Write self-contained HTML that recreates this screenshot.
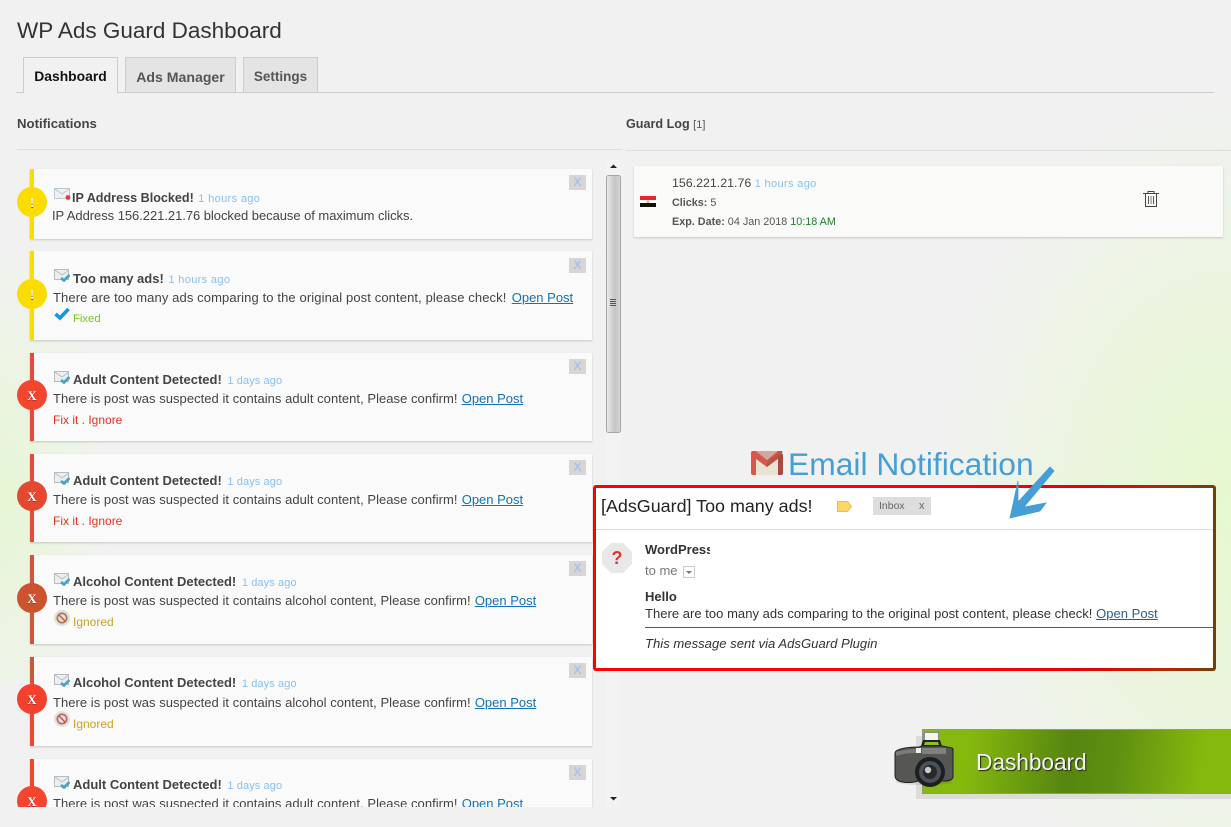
<!DOCTYPE html>
<html lang="en">
<head>
<meta charset="utf-8">
<title>WP Ads Guard Dashboard</title>
<style>
html,body{margin:0;padding:0}
body{width:1231px;height:827px;position:relative;overflow:hidden;background:#f1f1f1;font-family:"Liberation Sans",sans-serif;color:#444;font-size:13px}
.a{position:absolute;white-space:nowrap}
.bgl{position:absolute;left:0;top:60px;width:130px;height:621px;background:radial-gradient(ellipse 110px 260px at 0 440px,#e6f6d4 0,#edf4e4 55%,rgba(241,241,241,0) 100%)}
.bgr{position:absolute;left:850px;top:0;width:381px;height:827px;background:radial-gradient(ellipse 300px 420px at 381px 510px,#e6f9cf 0,#ebf5dd 45%,rgba(241,241,241,0) 100%)}
.tab{position:absolute;top:57px;height:34px;line-height:37px;text-align:center;font-weight:bold;font-size:14px;border:1px solid #ccc;border-bottom:0;background:#e4e4e4;color:#555}
.list{position:absolute;left:0;top:160px;width:606px;height:647px;overflow:hidden}
.card{position:absolute;left:30px;width:558px;background:#fafafa;border-left:4px solid #e8493a;box-shadow:0 1px 2px rgba(0,0,0,.18)}
.dot{position:absolute;left:17px;width:30px;height:30px;border-radius:50%;text-align:center;color:#fff;font:bold 13px/31px "Liberation Serif",serif;text-shadow:0 1px 0 #a33}
.x{position:absolute;left:569px;width:17px;height:15px;background:#d6d6d6;color:#a9c3e4;font:bold 12px/15px "Liberation Sans",sans-serif;text-align:center}
.t{position:absolute;left:73px;margin-top:.5px;font-weight:bold;font-size:13px;color:#444;white-space:nowrap;line-height:16px}
.t span{font-weight:normal;font-size:11px;color:#86c1f2;margin-left:2px;letter-spacing:.1px}
.t span.h{margin-left:1px;letter-spacing:.35px}
.b{position:absolute;left:53px;margin-top:1px;font-size:13px;letter-spacing:.04px;color:#444;white-space:nowrap;line-height:16px}
.b a{color:#0f73b5;text-decoration:underline;margin-left:.5px;letter-spacing:0}
.s{position:absolute;margin-top:1px;font-size:12px;white-space:nowrap;line-height:14px}
.m{position:absolute;left:54px;width:16px;height:13px}
.log{font-size:10.8px;color:#555}
</style>
</head>
<body>
<div class="bgl"></div>
<div class="bgr"></div>

<div class="a" style="left:17px;top:17px;font-size:22.5px;line-height:28px;color:#333">WP Ads Guard Dashboard</div>
<div class="a" style="left:16px;top:92px;width:1198px;height:1px;background:#ccc"></div>
<div class="tab" style="left:23px;width:93px;height:35px;background:#f1f1f1;color:#111;font-size:13.9px">Dashboard</div>
<div class="tab" style="left:125px;width:109px;font-size:14.1px;line-height:38px">Ads Manager</div>
<div class="tab" style="left:243px;width:73px;font-size:13.5px">Settings</div>

<div class="a" style="left:17px;top:116px;font-weight:bold;font-size:13.2px;line-height:16px;color:#444">Notifications</div>
<div class="a" style="left:17px;top:149px;width:605px;height:1px;background:#ddd"></div>
<div class="a" style="left:626px;top:116px;font-weight:bold;font-size:12.6px;line-height:16px;color:#444">Guard Log <span style="font-weight:normal;font-size:11px;color:#555">[1]</span></div>
<div class="a" style="left:626px;top:150px;width:605px;height:1px;background:#ddd"></div>

<div class="list">
  <div class="card" style="top:9px;height:70px;border-color:#fbdc00"></div>
  <div class="dot" style="top:27px;background:#fbdc00">!</div>
  <div class="x" style="top:15px">X</div>
  <svg class="m" style="top:28px;left:54px;width:18px" viewBox="0 0 18 13"><rect x=".5" y=".5" width="15" height="10" fill="#f0f0f0" stroke="#bcc8d2"/><path d="M1 1l7 5 7-5" fill="none" stroke="#bcc8d2"/><circle cx="14" cy="9.5" r="2.4" fill="#e23a4a"/></svg>
  <div class="t" style="top:29px;left:72px;font-size:12.6px">IP Address Blocked! <span class="h">1 hours ago</span></div>
  <div class="b" style="top:47px;left:52px;letter-spacing:-.05px">IP Address 156.221.21.76 blocked because of maximum clicks.</div>

  <div class="card" style="top:91px;height:89px;border-color:#fbdc00"></div>
  <div class="dot" style="top:119px;background:#fbdc00">!</div>
  <div class="x" style="top:98px">X</div>
  <svg class="m" style="top:109px" viewBox="0 0 16 13"><rect x=".5" y=".5" width="14" height="10" fill="#eee" stroke="#b5bdc2"/><path d="M1 1l7 5 7-5" fill="none" stroke="#b5bdc2"/><path d="M7 9l3 2.5L15.500 6" fill="none" stroke="#4aa3cf" stroke-width="2.800"/></svg>
  <div class="t" style="top:110px">Too many ads! <span class="h">1 hours ago</span></div>
  <div class="b" style="top:129px;letter-spacing:.11px">There are too many ads comparing to the original post content, please check! <a style="margin-left:1.500px">Open Post</a></div>
  <svg class="a" style="left:54px;top:147px" width="16" height="14" viewBox="0 0 16 14"><path d="M1.500 7l4.500 4L14.500 2" fill="none" stroke="#1a92e6" stroke-width="3.600"/></svg>
  <div class="s" style="left:73px;top:151px;color:#6ecb1c;font-size:11.300px">Fixed</div>

  <div class="card" style="top:193px;height:88px;border-color:#e9483a"></div>
  <div class="dot" style="top:220px;background:#f4452f">X</div>
  <div class="x" style="top:199px">X</div>
  <svg class="m" style="top:211px" viewBox="0 0 16 13"><rect x=".5" y=".5" width="14" height="10" fill="#eee" stroke="#b5bdc2"/><path d="M1 1l7 5 7-5" fill="none" stroke="#b5bdc2"/><path d="M7 9l3 2.5L15.500 6" fill="none" stroke="#4aa3cf" stroke-width="2.800"/></svg>
  <div class="t" style="top:211px">Adult Content Detected! <span>1 days ago</span></div>
  <div class="b" style="top:230px">There is post was suspected it contains adult content, Please confirm! <a>Open Post</a></div>
  <div class="s" style="left:53px;top:252px;color:#e3331c">Fix it . Ignore</div>

  <div class="card" style="top:294px;height:88px;border-color:#e9483a"></div>
  <div class="dot" style="top:321px;background:#e4482f">X</div>
  <div class="x" style="top:300px">X</div>
  <svg class="m" style="top:312px" viewBox="0 0 16 13"><rect x=".5" y=".5" width="14" height="10" fill="#eee" stroke="#b5bdc2"/><path d="M1 1l7 5 7-5" fill="none" stroke="#b5bdc2"/><path d="M7 9l3 2.5L15.500 6" fill="none" stroke="#4aa3cf" stroke-width="2.800"/></svg>
  <div class="t" style="top:312px">Adult Content Detected! <span>1 days ago</span></div>
  <div class="b" style="top:331px">There is post was suspected it contains adult content, Please confirm! <a>Open Post</a></div>
  <div class="s" style="left:53px;top:353px;color:#e3331c">Fix it . Ignore</div>

  <div class="card" style="top:395px;height:89px;border-color:#d1553a"></div>
  <div class="dot" style="top:423px;background:#cd5230">X</div>
  <div class="x" style="top:401px">X</div>
  <svg class="m" style="top:413px" viewBox="0 0 16 13"><rect x=".5" y=".5" width="14" height="10" fill="#eee" stroke="#b5bdc2"/><path d="M1 1l7 5 7-5" fill="none" stroke="#b5bdc2"/><path d="M7 9l3 2.5L15.500 6" fill="none" stroke="#4aa3cf" stroke-width="2.800"/></svg>
  <div class="t" style="top:413px">Alcohol Content Detected! <span>1 days ago</span></div>
  <div class="b" style="top:432px">There is post was suspected it contains alcohol content, Please confirm! <a>Open Post</a></div>
  <svg class="a" style="left:54px;top:450px" width="16" height="16" viewBox="0 0 16 16"><circle cx="8" cy="8" r="8" fill="#dfe2cf"/><circle cx="8" cy="8" r="4.700" fill="none" stroke="#b86a60" stroke-width="1.600"/><path d="M4.700 4.700l6.600 6.600" stroke="#b86a60" stroke-width="1.600"/></svg>
  <div class="s" style="left:73px;top:454px;color:#c9a227">Ignored</div>

  <div class="card" style="top:497px;height:89px;border-color:#f4452f;border-image:linear-gradient(#c75a36 0,#c75a36 25%,#f4452f 30%) 1"></div>
  <div class="dot" style="top:524px;background:#f4402c">X</div>
  <div class="x" style="top:503px">X</div>
  <svg class="m" style="top:514px" viewBox="0 0 16 13"><rect x=".5" y=".5" width="14" height="10" fill="#eee" stroke="#b5bdc2"/><path d="M1 1l7 5 7-5" fill="none" stroke="#b5bdc2"/><path d="M7 9l3 2.500L15.500 6" fill="none" stroke="#4aa3cf" stroke-width="2.800"/></svg>
  <div class="t" style="top:514px">Alcohol Content Detected! <span>1 days ago</span></div>
  <div class="b" style="top:534px">There is post was suspected it contains alcohol content, Please confirm! <a>Open Post</a></div>
  <svg class="a" style="left:54px;top:551px" width="16" height="16" viewBox="0 0 16 16"><circle cx="8" cy="8" r="8" fill="#e2e2da"/><circle cx="8" cy="8" r="4.700" fill="none" stroke="#c0605f" stroke-width="1.600"/><path d="M4.700 4.700l6.600 6.600" stroke="#c0605f" stroke-width="1.600"/></svg>
  <div class="s" style="left:73px;top:556px;color:#d1a11f">Ignored</div>

  <div class="card" style="top:599px;height:89px;border-color:#f4452f"></div>
  <div class="dot" style="top:626px;background:#f4452f">X</div>
  <div class="x" style="top:605px">X</div>
  <svg class="m" style="top:616px" viewBox="0 0 16 13"><rect x=".5" y=".5" width="14" height="10" fill="#eee" stroke="#b5bdc2"/><path d="M1 1l7 5 7-5" fill="none" stroke="#b5bdc2"/><path d="M7 9l3 2.500L15.500 6" fill="none" stroke="#4aa3cf" stroke-width="2.800"/></svg>
  <div class="t" style="top:616px">Adult Content Detected! <span>1 days ago</span></div>
  <div class="b" style="top:635px">There is post was suspected it contains adult content, Please confirm! <a>Open Post</a></div>
</div>

<!-- scrollbar -->
<div class="a" style="left:606px;top:160px;width:15px;height:647px;background:#f3f3f3"></div>
<svg class="a" style="left:606px;top:160px" width="15" height="647" viewBox="0 0 15 647">
  <path d="M4 8h7l-3.500-3.500z" fill="#222"/>
  <path d="M4 637h7l-3.500 3.500z" fill="#222"/>
  <defs><linearGradient id="sb" x1="0" x2="1" y1="0" y2="0"><stop offset="0" stop-color="#ececec"/><stop offset=".6" stop-color="#c4c4c4"/><stop offset="1" stop-color="#d6d6d6"/></linearGradient></defs>
  <rect x=".5" y="15.500" width="14" height="257" rx="2" fill="url(#sb)" stroke="#a6a6a6"/>
  <path d="M4 139.500h6M4 141.500h6M4 143.500h6M4 145.500h6" stroke="#555" stroke-width="1"/>
</svg>

<!-- guard log card -->
<div class="a" style="left:634px;top:166px;width:589px;height:71px;background:#fafbf9;box-shadow:0 1px 2px rgba(0,0,0,.18)"></div>
<svg class="a" style="left:640px;top:196px" width="16" height="11" viewBox="0 0 16 11"><rect width="16" height="4" fill="#e8262d"/><rect y="4" width="16" height="3" fill="#fff"/><rect y="7" width="16" height="4" fill="#111"/><circle cx="8" cy="5.500" r="1.300" fill="#e0b040"/></svg>
<div class="a" style="left:672px;top:175px;font-size:12.400px;line-height:16px;color:#444">156.221.21.76 <span style="font-size:11px;color:#86c1f2;letter-spacing:.35px">1 hours ago</span></div>
<div class="a log" style="left:672px;top:195px;line-height:16px"><b>Clicks:</b> 5</div>
<div class="a log" style="left:672px;top:214px;line-height:16px"><b>Exp. Date:</b> 04 Jan 2018 <span style="color:#1d7d2a">10:18 AM</span></div>
<svg class="a" style="left:1143px;top:191px" width="16" height="16" viewBox="0 0 16 16"><path d="M0 2.500h16M5 2.500V.5h6v2M2.500 2.500v13h11v-13" fill="none" stroke="#444" stroke-width="1"/><path d="M5.500 5v8M10.500 5v8" stroke="#555" stroke-width="1"/><path d="M8 5v8" stroke="#aaa" stroke-width="1.600"/></svg>

<!-- email notification -->
<svg class="a" style="left:751px;top:451px" width="33" height="24" viewBox="0 0 33 24">
  <path d="M2 0h28a2 2 0 0 1 2 2v20a2 2 0 0 1-2 2H2a2 2 0 0 1-2-2V2a2 2 0 0 1 2-2z" fill="#e8e4d4"/>
  <path d="M5 0h22L16 9z" fill="#cfa9a0"/>
  <path d="M0 2a2 2 0 0 1 2-2h3v24H2a2 2 0 0 1-2-2z" fill="#d9574a"/>
  <path d="M1 0h4l11 9 0 7L1 5z" fill="#d9574a"/>
  <path d="M31 0h-4L16 9v7l15-11z" fill="#c9564b"/>
  <path d="M27 5l5-2v19a2 2 0 0 1-2 2h-3z" fill="#a84a3e"/>
  <path d="M16 12L32 0v1L16 16z" fill="#a84a3e" opacity=".5"/>
</svg>
<div class="a" style="left:788px;top:445px;font-size:31.800px;line-height:38px;color:#459fd6">Email Notification</div>

<div class="a" style="left:596px;top:488px;width:617px;height:180px;background:#fff"></div>
<div class="a" style="left:593px;top:485px;width:623px;height:3px;border-radius:3px 3px 0 0;background:linear-gradient(90deg,#ff0000 0,#ff0000 60%,#e80000 78%,#b02a00 92%,#7a3e00 99%)"></div>
<div class="a" style="left:593px;top:668px;width:623px;height:3px;border-radius:0 0 3px 3px;background:linear-gradient(90deg,#ff0000 0,#ff0000 60%,#e80000 78%,#b02a00 92%,#7a3e00 99%)"></div>
<div class="a" style="left:593px;top:488px;width:3px;height:180px;background:#ff0000"></div>
<div class="a" style="left:1213px;top:488px;width:3px;height:180px;background:#7a3e00"></div>
<svg class="a" style="left:1008px;top:465px" width="48" height="56" viewBox="0 0 48 56"><path d="M2 53L10 16V37L42 2 46 6 16 42 38 38 32 46z" fill="#459fd6" stroke="#459fd6" stroke-width=".8"/></svg>
<div class="a" style="left:601px;top:496px;font-size:17.900px;line-height:21px;color:#222">[AdsGuard] Too many ads!</div>
<svg class="a" style="left:837px;top:501px" width="15" height="11" viewBox="0 0 15 11"><path d="M.5.500h10L14.500 5.500l-4 5H.5z" fill="#fdd663" stroke="#e8bd55"/></svg>
<div class="a" style="left:873px;top:497px;width:58px;height:18px;background:#ddd"></div>
<div class="a" style="left:879px;top:499px;font-size:10.500px;line-height:14px;color:#666">Inbox</div>
<div class="a" style="left:919px;top:499px;font-size:11px;line-height:14px;color:#666">x</div>
<div class="a" style="left:596px;top:529px;width:617px;height:1px;background:#ddd"></div>
<svg class="a" style="left:602px;top:543px" width="30" height="30" viewBox="0 0 30 30"><path d="M9 0h12l9 9v12l-9 9H9l-9-9V9z" fill="#e8e8e8"/><text x="15" y="21" font-family="Liberation Sans" font-weight="bold" font-size="18" text-anchor="middle" fill="#d93a35">?</text></svg>
<div class="a" style="left:645px;top:542px;width:65px;overflow:hidden;font-weight:bold;font-size:13px;line-height:16px;color:#333">WordPress</div>
<div class="a" style="left:645px;top:563px;font-size:13px;line-height:16px;color:#777">to me</div>
<svg class="a" style="left:683px;top:566px" width="12" height="12" viewBox="0 0 12 12"><rect x=".5" y=".5" width="11" height="11" fill="#fff" stroke="#ccc"/><path d="M3 5h6L6 8z" fill="#777"/></svg>
<div class="a" style="left:645px;top:589px;font-weight:bold;font-size:13px;line-height:16px;color:#333">Hello</div>
<div class="a" style="left:645px;top:606px;font-size:13px;letter-spacing:.03px;line-height:16px;color:#333">There are too many ads comparing to the original post content, please check! <span style="color:#2b5f87;text-decoration:underline">Open Post</span></div>
<div class="a" style="left:645px;top:627px;width:568px;height:1px;background:linear-gradient(90deg,#555,#555 60%,#4f6b35)"></div>
<div class="a" style="left:645px;top:636px;font-style:italic;font-size:13.100px;line-height:16px;color:#333">This message sent via AdsGuard Plugin</div>

<!-- dashboard banner -->
<div class="a" style="left:916px;top:736px;width:315px;height:63px;background:#dcdcd9"></div>
<div class="a" style="left:922px;top:729px;width:309px;height:65px;box-sizing:border-box;border:1px solid #8f9a7c;border-right:0;background:linear-gradient(97deg,#85b90e 0,#85b90e 15%,#578510 47%,#5f8f10 62%,#85b90e 90%,#85b90e 100%)"></div>
<div class="a" style="left:976px;top:747px;font-size:22.800px;letter-spacing:-.1px;line-height:30px;color:#f2f2f2;text-shadow:1px 1px 1px #222">Dashboard</div>
<svg class="a" style="left:894px;top:730px" width="60" height="58" viewBox="0 0 60 58">
  <ellipse cx="30" cy="52" rx="28" ry="3" fill="#000" opacity=".1"/>
  <path d="M30.500 2.500h14v8h-14z" fill="#f4f4f4" stroke="#888"/>
  <path d="M29 10h17l4 12H25z" fill="#222"/><path d="M31 12h13l1 3H30z" fill="#8fbf20"/>
  <path d="M2 21c5-3 15-4 23-4l3-1h20l10 2c1 0 1 1 1 2v27c0 2-3 4-9 4H24c-5 2-14 2-19 0-3-1-4-3-4-6V24c0-1 0-2 1-3z" fill="#565654" stroke="#1e1e1e"/>
  <path d="M2 22c6-2 14-3 21-3v4c-8 0-15 1-21 3z" fill="#7b7b78"/>
  <path d="M28 18h24v6H28z" fill="#808080"/>
  <rect x="22" y="18" width="5" height="5" fill="#eee"/>
  <circle cx="36" cy="42" r="15" fill="#1c1f21"/><circle cx="36" cy="42" r="11" fill="#4e5153"/><circle cx="36" cy="42" r="7" fill="#26282a"/><circle cx="34" cy="40" r="3.200" fill="#c9cbcc"/>
</svg>
</body>
</html>
